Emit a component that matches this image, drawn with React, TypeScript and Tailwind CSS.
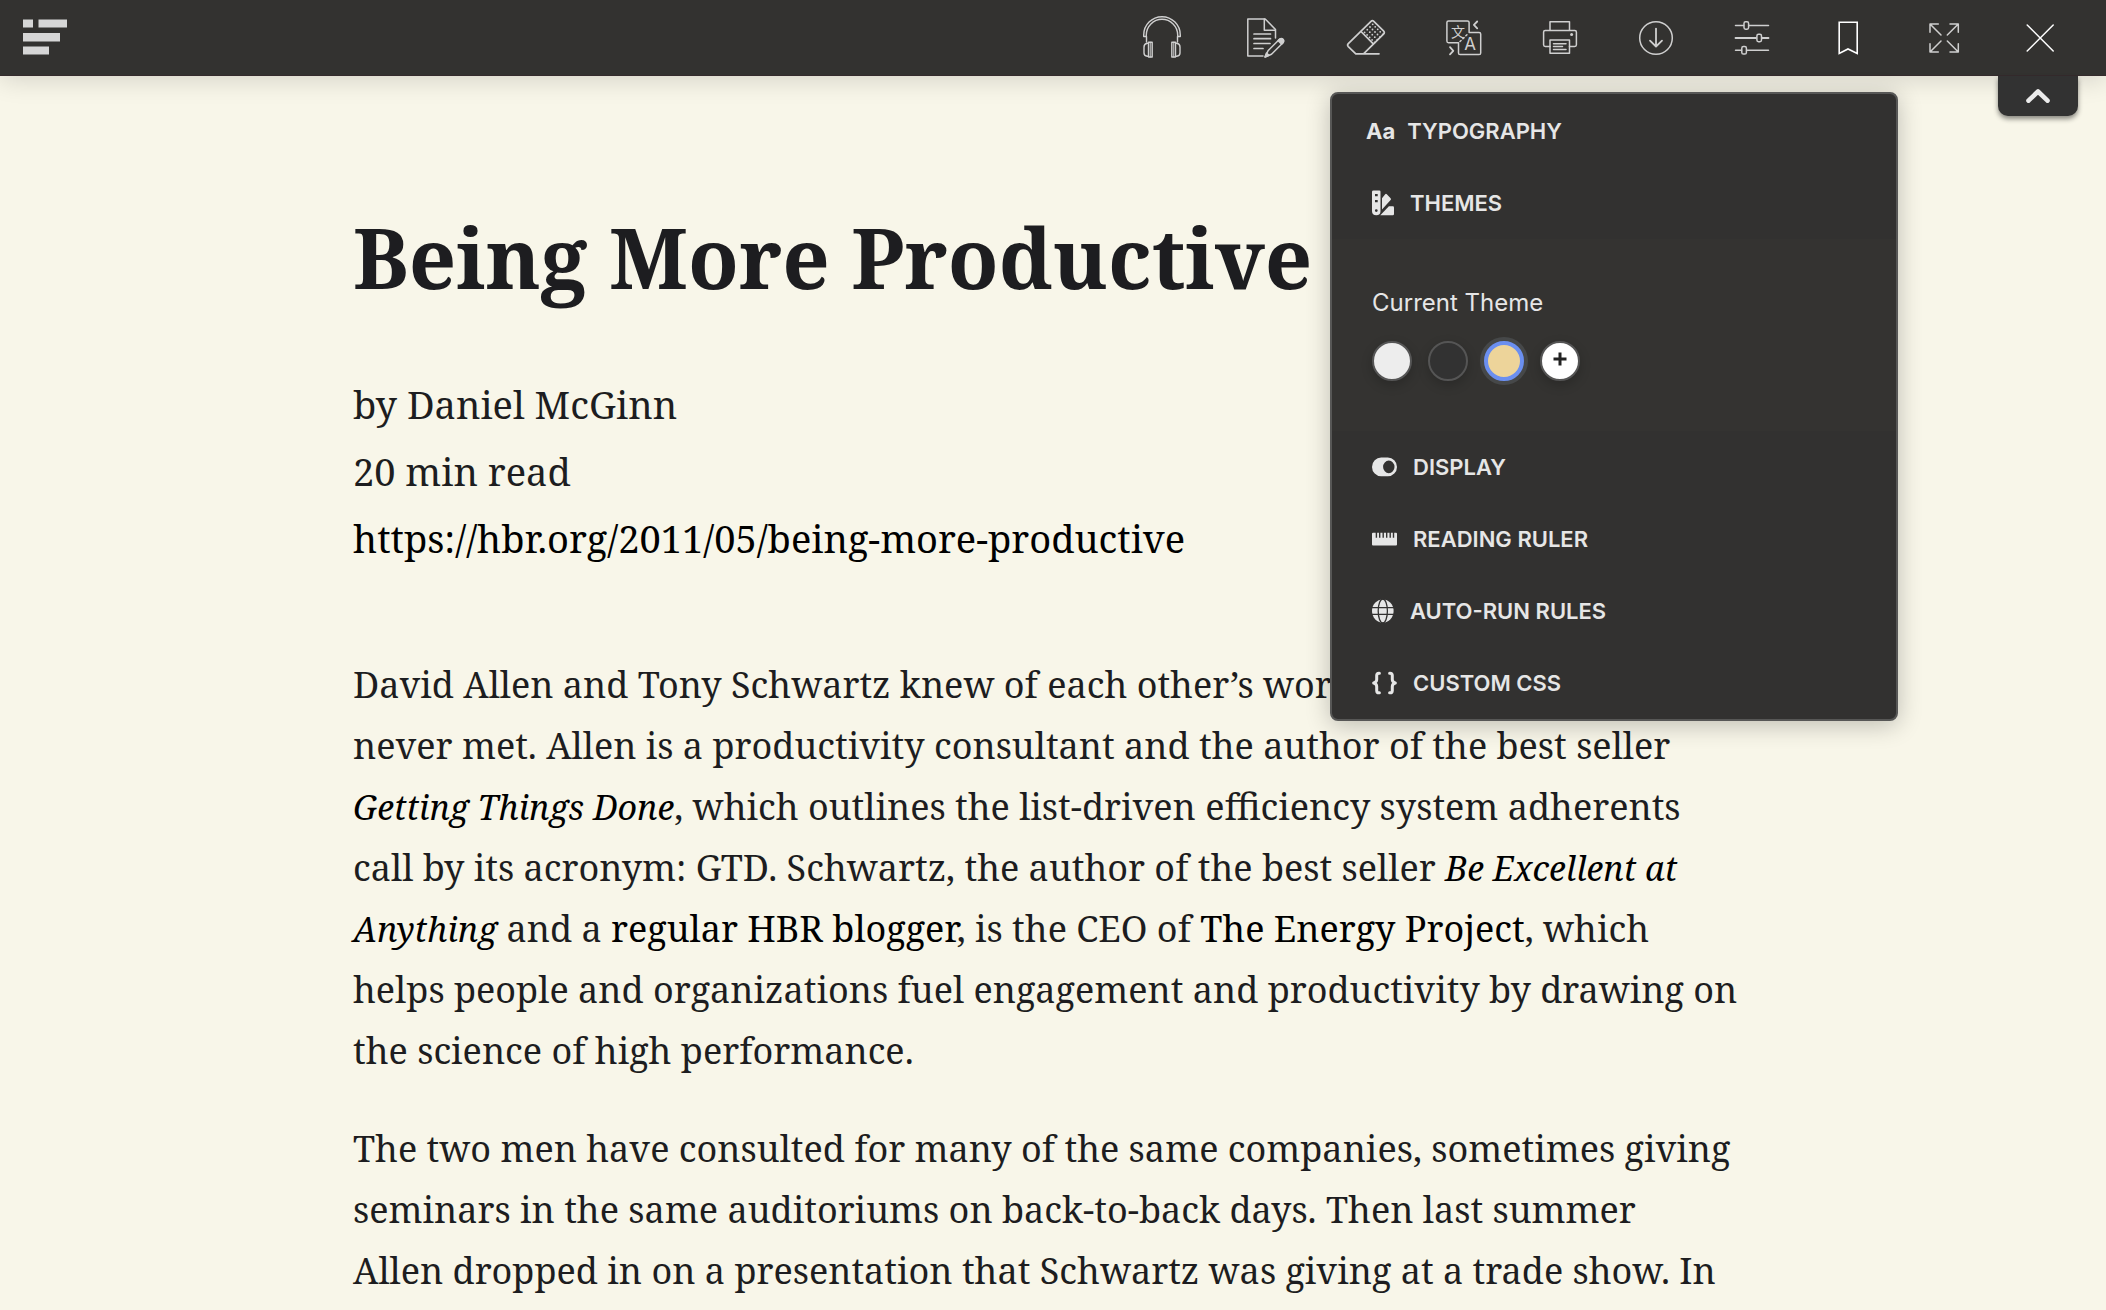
import { useState, type ReactNode } from "react";

const iconProps = {
  fill: "none",
  strokeLinecap: "round" as const,
  strokeLinejoin: "round" as const,
  "aria-hidden": true,
};

function Logo() {
  return (
    <svg width="44" height="36" viewBox="0 0 44 36" fill="#d6d6d6" aria-hidden="true">
      <rect x="0" y="0.5" width="10" height="8" />
      <rect x="15.5" y="0.5" width="28.5" height="8" />
      <rect x="0" y="14" width="37" height="8.5" />
      <rect x="0" y="27.5" width="26" height="8" />
    </svg>
  );
}

function HeadphonesIcon() {
  return (
    <svg width="40" height="46" viewBox="0 0 40 46" stroke="#cfcfcf" strokeWidth="1.4" {...iconProps}>
      <path d="M4.5 27V21.5H1.7V20a18.3 18.3 0 0 1 36.6 0v1.5h-2.8V27" />
      <path d="M4.3 21.5V20a15.7 15.7 0 0 1 31.4 0v1.5" />
      <path d="M6.5 27.2H10.2V42H6.5zM33.5 27.2H29.8V42h3.7z" />
      <path d="M8.3 27.2V42M31.7 27.2V42" strokeWidth="0.9" />
      <path d="M6.5 28.3H5.2Q2 29 2 32v6q0 2.8 3.2 3.2h1.3M33.5 28.3h1.3q3.2.7 3.2 3.7v6q0 2.8-3.2 3.2h-1.3" />
    </svg>
  );
}

function NoteIcon() {
  return (
    <svg width="40" height="42" viewBox="0 0 40 42" stroke="#cfcfcf" strokeWidth="1.5" {...iconProps}>
      <path d="M17 39H1.8V2h17.4l10.3 10.5V21" />
      <path d="M18.3 2v11.2h11" />
      <path d="M8 17h16.5M8 21.7h16.5M8 26.5h16M8 31.5h9" strokeWidth="1.7" />
      <path d="M22 33.8 33.5 22.2q2-1.4 3.5 0t0 3.5L25.5 37.2 19 40z" />
      <path d="m32.2 23.6 3.5 3.5 1.2-1.3q1.2-2-.2-3.4t-3.2 0zM20.5 36l2.5 2.3-4 1.7z" fill="#cfcfcf" />
    </svg>
  );
}

const eraserDots = [0, 1, 2, 3, 4].flatMap((r) =>
  [0, 1, 2, 3].map((c) => [18.6 + c * 2.7 + r * 2.5, 13.4 - c * 2.7 + r * 2.5]),
);

function EraserIcon() {
  return (
    <svg width="40" height="38" viewBox="0 0 40 38" stroke="#cfcfcf" strokeWidth="1.7" {...iconProps}>
      <path d="M17.5 34.8 37.5 15.2q1.6-1.7 0-3.4L27.8 2.4q-1.4-1.4-2.8 0L2.3 24.6q-1.4 1.5 0 3l7.5 7.2H33" />
      <path d="m15 12.5 12.3 12.3" />
      {eraserDots.map(([x, y], i) => (
        <circle key={i} cx={x} cy={y} r="0.9" fill="#cfcfcf" stroke="none" />
      ))}
    </svg>
  );
}

function TranslateIcon() {
  return (
    <svg width="36" height="36" viewBox="0 0 36 36" stroke="#cfcfcf" strokeWidth="1.5" {...iconProps}>
      <path d="M12 22.7H2.5q-1.6 0-1.6-1.6V2.6Q.9 1 2.5 1h19q1.6 0 1.6 1.6v9.9h10q1.6 0 1.6 1.6v18.8q0 1.6-1.6 1.6h-19q-1.6 0-1.6-1.6V22.7" />
      <path d="m14 21.5 8.5-8.3" strokeDasharray="1.5 2.6" />
      <path d="m31.2 1.5-3.3 3.4 3.3 3.4M4 27.2l3.3 3.6L4 34.4" strokeWidth="1.8" />
      <text x="12" y="17" textAnchor="middle" fontSize="14" fontFamily="'Noto Sans CJK SC', sans-serif" fill="#cfcfcf" stroke="none">文</text>
      <text x="24" y="30" textAnchor="middle" fontSize="17" fontFamily="Inter, sans-serif" fill="#cfcfcf" stroke="none">A</text>
    </svg>
  );
}

function PrinterIcon() {
  return (
    <svg width="36" height="36" viewBox="0 0 36 36" stroke="#cfcfcf" strokeWidth="1.5" {...iconProps}>
      <path d="M8 10.4V1.7h19.5v8.7M8 26.4H3.2q-1.6 0-1.6-1.6V12q0-1.6 1.6-1.6h29.6q1.6 0 1.6 1.6v12.8q0 1.6-1.6 1.6h-5.3" />
      <path d="M8 20h19.5v13.3H8zM11.5 23.7H24M11.5 26.6h9M11.5 29.6H24" />
      <circle cx="29.6" cy="14.6" r="1.5" fill="#cfcfcf" stroke="none" />
    </svg>
  );
}

function DownloadIcon() {
  return (
    <svg width="36" height="36" viewBox="0 0 36 36" stroke="#cfcfcf" strokeWidth="1.5" {...iconProps}>
      <circle cx="18" cy="18" r="16.3" />
      <path d="M18 8.6v17.8m-6-5.8 6 5.9 6-5.9" strokeWidth="1.8" />
    </svg>
  );
}

function SlidersIcon() {
  return (
    <svg width="36" height="36" viewBox="0 0 36 36" stroke="#cfcfcf" strokeWidth="1.5" {...iconProps}>
      <path d="M1.5 5.5h8M15 5.5h19.5M1.5 30.3h6M13 30.3h21.5" />
      <path d="M1.5 18H22M28 18h6.5" strokeWidth="1.8" />
      <rect x="10" y="1.8" width="4.6" height="7.4" rx="1.6" />
      <rect x="22.9" y="14.3" width="4.6" height="7.4" rx="1.6" />
      <rect x="7.8" y="26.6" width="4.6" height="7.4" rx="1.6" />
    </svg>
  );
}

function BookmarkIcon() {
  return (
    <svg width="36" height="36" viewBox="0 0 36 36" stroke="#ffffff" strokeWidth="1.6" {...iconProps}>
      <path d="M9.2 2.2h18v31.3L18 29l-8.8 4.5z" strokeLinejoin="miter" />
    </svg>
  );
}

function ExpandIcon() {
  return (
    <svg width="36" height="36" viewBox="0 0 36 36" stroke="#cfcfcf" strokeWidth="1.5" {...iconProps}>
      <path d="M12.3 4H4v8.3M4 4l11 11M24 4h8.3v8.3M32.3 4l-11 11M12.3 32H4v-8.3M4 32l11-11M24 32h8.3v-8.3M32.3 32l-11-11" />
    </svg>
  );
}

function CloseIcon() {
  return (
    <svg width="36" height="36" viewBox="0 0 36 36" stroke="#ffffff" strokeWidth="1.5" {...iconProps}>
      <path d="m5.2 5 26 26M31.2 5l-26 26" />
    </svg>
  );
}

function ThemesIcon() {
  return (
    <svg width="22" height="26" viewBox="0 0 22 26" fill="#e6e6e6" aria-hidden="true">
      <path
        fillRule="evenodd"
        d="M1.5.5h5.8q1.2 0 1.2 1.3v19.5q0 4-4.2 4T0 21.3V1.8Q0 .5 1.5.5zM3 4v2.2h2.7V4zm0 6v2.3h2.7V10zm1.3 9.2a1.4 1.4 0 1 0 0 2.8 1.4 1.4 0 0 0 0-2.8z"
      />
      <path d="M10 8.2 13.2 4.3q.7-.9 1.6-.1l3.8 4q.8.9 0 1.8L10 19.5z" />
      <path d="m8.3 25.3 8.6-9h4q1.1 0 1.1 1.2v6.6q0 1.2-1.2 1.2z" />
    </svg>
  );
}

function DisplayIcon() {
  return (
    <svg width="25" height="20" viewBox="0 0 25 20" fill="#e6e6e6" aria-hidden="true">
      <path
        fillRule="evenodd"
        d="M9.2.5h6.6a9.2 9.4 0 0 1 0 18.8H9.2A9.2 9.4 0 0 1 9.2.5zM16.8 3.6a5.7 6.3 0 1 0 0 12.6 5.7 6.3 0 0 0 0-12.6z"
      />
    </svg>
  );
}

function RulerIcon() {
  return (
    <svg width="25" height="14" viewBox="0 0 25 14" fill="#e6e6e6" aria-hidden="true">
      <path d="M1 .8h2.7v5h1.4v-5H7v5h1.4v-5h2.1v5h1.4v-5H14v5h1.4v-5h2.1v5h1.4v-5h1.9v5h1.4v-5h1.8q1 0 1 1v10.7q0 1-1 1H1q-1 0-1-1V1.8q0-1 1-1z" />
    </svg>
  );
}

function GlobeIcon() {
  return (
    <svg width="22" height="24" viewBox="0 0 22 24" aria-hidden="true">
      <ellipse cx="10.8" cy="12" rx="10.8" ry="11.6" fill="#e6e6e6" />
      <g stroke="#323130" strokeWidth="1.3" fill="none">
        <ellipse cx="10.8" cy="12" rx="4.6" ry="12" />
        <path d="M0 8.6h22M0 15.4h22" />
      </g>
    </svg>
  );
}

function BracesIcon() {
  return (
    <svg width="25" height="24" viewBox="0 0 25 24" stroke="#e6e6e6" strokeWidth="3" {...iconProps}>
      <path d="M7.4 2.2H7q-2.3 0-2.3 2.4v4q0 2.6-3 3.4 3 .8 3 3.4v4q0 2.4 2.3 2.4h.4M17.6 2.2h.4q2.3 0 2.3 2.4v4q0 2.6 3 3.4-3 .8-3 3.4v4q0 2.4-2.3 2.4h-.4" />
    </svg>
  );
}

const tools: { label: string; width: string; icon: ReactNode }[] = [
  { label: "Listen", width: "w-[108px]", icon: <HeadphonesIcon /> },
  { label: "Annotate", width: "w-[100px]", icon: <NoteIcon /> },
  { label: "Erase", width: "w-[100px]", icon: <EraserIcon /> },
  { label: "Translate", width: "w-24", icon: <TranslateIcon /> },
  { label: "Print", width: "w-24", icon: <PrinterIcon /> },
  { label: "Download", width: "w-24", icon: <DownloadIcon /> },
  { label: "Style options", width: "w-24", icon: <SlidersIcon /> },
  { label: "Bookmark", width: "w-24", icon: <BookmarkIcon /> },
  { label: "Full screen", width: "w-24", icon: <ExpandIcon /> },
  { label: "Close", width: "w-24", icon: <CloseIcon /> },
];

function MenuRow({ icon, children }: { icon: ReactNode; children: ReactNode }) {
  return (
    <button type="button" className="flex h-18 w-full items-center gap-4 pl-10 text-left text-[22px] font-semibold">
      {icon}
      {children}
    </button>
  );
}

const themes = [
  { id: "light", className: "bg-[#ededed]" },
  { id: "dark", className: "bg-[#323232]" },
  { id: "sepia", className: "bg-[#edd49a]" },
];

function StylePanel() {
  const [theme, setTheme] = useState("sepia");
  return (
    <section
      aria-label="Style options"
      className="absolute top-[92px] right-[208px] w-[568px] rounded-lg border-2 border-[#575756] bg-[#323130] pt-px font-['Inter',sans-serif] text-[#e6e6e6] shadow-[0_4px_24px_rgba(0,0,0,0.24)]"
    >
      <button type="button" className="flex h-18 w-full items-center gap-3 pl-[34px] text-left text-[22px] font-semibold">
        <span className="font-bold">Aa</span>
        TYPOGRAPHY
      </button>
      <MenuRow icon={<ThemesIcon />}>THEMES</MenuRow>
      <fieldset className="bg-[#343331] px-10 pt-12 pb-[50px]">
        <legend className="contents">
          <span className="block text-2xl leading-8">Current Theme</span>
        </legend>
        <div className="mt-[22px] flex gap-4">
          {themes.map((t) => (
            <input
              key={t.id}
              type="radio"
              name="theme"
              aria-label={t.id}
              checked={theme === t.id}
              onChange={() => setTheme(t.id)}
              className={`size-10 appearance-none rounded-full border-2 border-[#555555] shadow-[0_4px_12px_rgba(0,0,0,0.2)] checked:border-4 checked:border-[#6b8ff0] checked:shadow-[0_0_0_4px_#464849] ${t.className}`}
            />
          ))}
          <button
            type="button"
            aria-label="Add theme"
            className="flex size-10 items-center justify-center rounded-full border-2 border-[#555555] bg-white shadow-[0_4px_12px_rgba(0,0,0,0.2)]"
          >
            <svg width="14" height="18" viewBox="0 0 14 18" stroke="#222222" strokeWidth="3" aria-hidden="true">
              <path d="M7 .5v13M.5 7h13" />
            </svg>
          </button>
        </div>
      </fieldset>
      <MenuRow icon={<DisplayIcon />}>DISPLAY</MenuRow>
      <MenuRow icon={<RulerIcon />}>READING RULER</MenuRow>
      <MenuRow icon={<GlobeIcon />}>AUTO-RUN RULES</MenuRow>
      <MenuRow icon={<BracesIcon />}>CUSTOM CSS</MenuRow>
    </section>
  );
}

function Link({ children }: { children: ReactNode }) {
  return (
    <a href="#" className="text-black">
      {children}
    </a>
  );
}

function BookLink({ children }: { children: ReactNode }) {
  return (
    <Link>
      <em className="text-[34px] leading-none">{children}</em>
    </Link>
  );
}

export default function App() {
  return (
    <div className="relative min-h-screen bg-[#f8f6e9] font-['Noto_Serif','Liberation_Serif',serif] text-[#1d1d20]">
      <header className="relative flex h-19 items-center justify-between border-b border-[#352b2d] bg-[#333230] pr-[18px] pl-[23px] shadow-[0_4px_24px_rgba(0,0,0,0.14)]">
        <a href="#" aria-label="Home" className="pb-0.5">
          <Logo />
        </a>
        <nav aria-label="Reader tools" className="flex">
          {tools.map((t) => (
            <button key={t.label} type="button" aria-label={t.label} className={`flex h-18 items-center justify-center ${t.width}`}>
              {t.icon}
            </button>
          ))}
        </nav>
        <button
          type="button"
          aria-label="Collapse toolbar"
          className="absolute top-19 right-7 flex h-10 w-20 items-center justify-center rounded-b-[10px] bg-[#323232] shadow-[0_3px_5px_rgba(0,0,0,0.45)]"
        >
          <svg width="26" height="14" viewBox="0 0 26 14" stroke="#ebebeb" strokeWidth="4.6" {...iconProps}>
            <path d="M3.5 11.7 13 2.5l9.5 9.2" />
          </svg>
        </button>
      </header>

      <article className="mx-auto max-w-[1400px] pt-[131px]">
        <h1 className="text-[83px] leading-[100px] font-bold">Being More Productive</h1>
        <div className="mt-16 text-[38px] leading-[67px]">
          <p>by Daniel McGinn</p>
          <p>20 min read</p>
          <p>
            <Link>https://hbr.org/2011/05/being-more-productive</Link>
          </p>
        </div>
        <div className="mt-[82px] flex flex-col gap-[37px] text-[36px] leading-[61px] whitespace-nowrap">
          <p>
            David Allen and Tony Schwartz knew of each other’s work
            <br />
            never met. Allen is a productivity consultant and the author of the best seller
            <br />
            <BookLink>Getting Things Done</BookLink>, which outlines the list-driven efficiency system adherents
            <br />
            call by its acronym: GTD. Schwartz, the author of the best seller <BookLink>Be Excellent at</BookLink>
            <br />
            <BookLink>Anything</BookLink> and a <Link>regular HBR blogger</Link>, is the CEO of <Link>The Energy Project</Link>, which
            <br />
            helps people and organizations fuel engagement and productivity by drawing on
            <br />
            the science of high performance.
          </p>
          <p>
            The two men have consulted for many of the same companies, sometimes giving
            <br />
            seminars in the same auditoriums on back-to-back days. Then last summer
            <br />
            Allen dropped in on a presentation that Schwartz was giving at a trade show. In
          </p>
        </div>
      </article>

      <StylePanel />
    </div>
  );
}
